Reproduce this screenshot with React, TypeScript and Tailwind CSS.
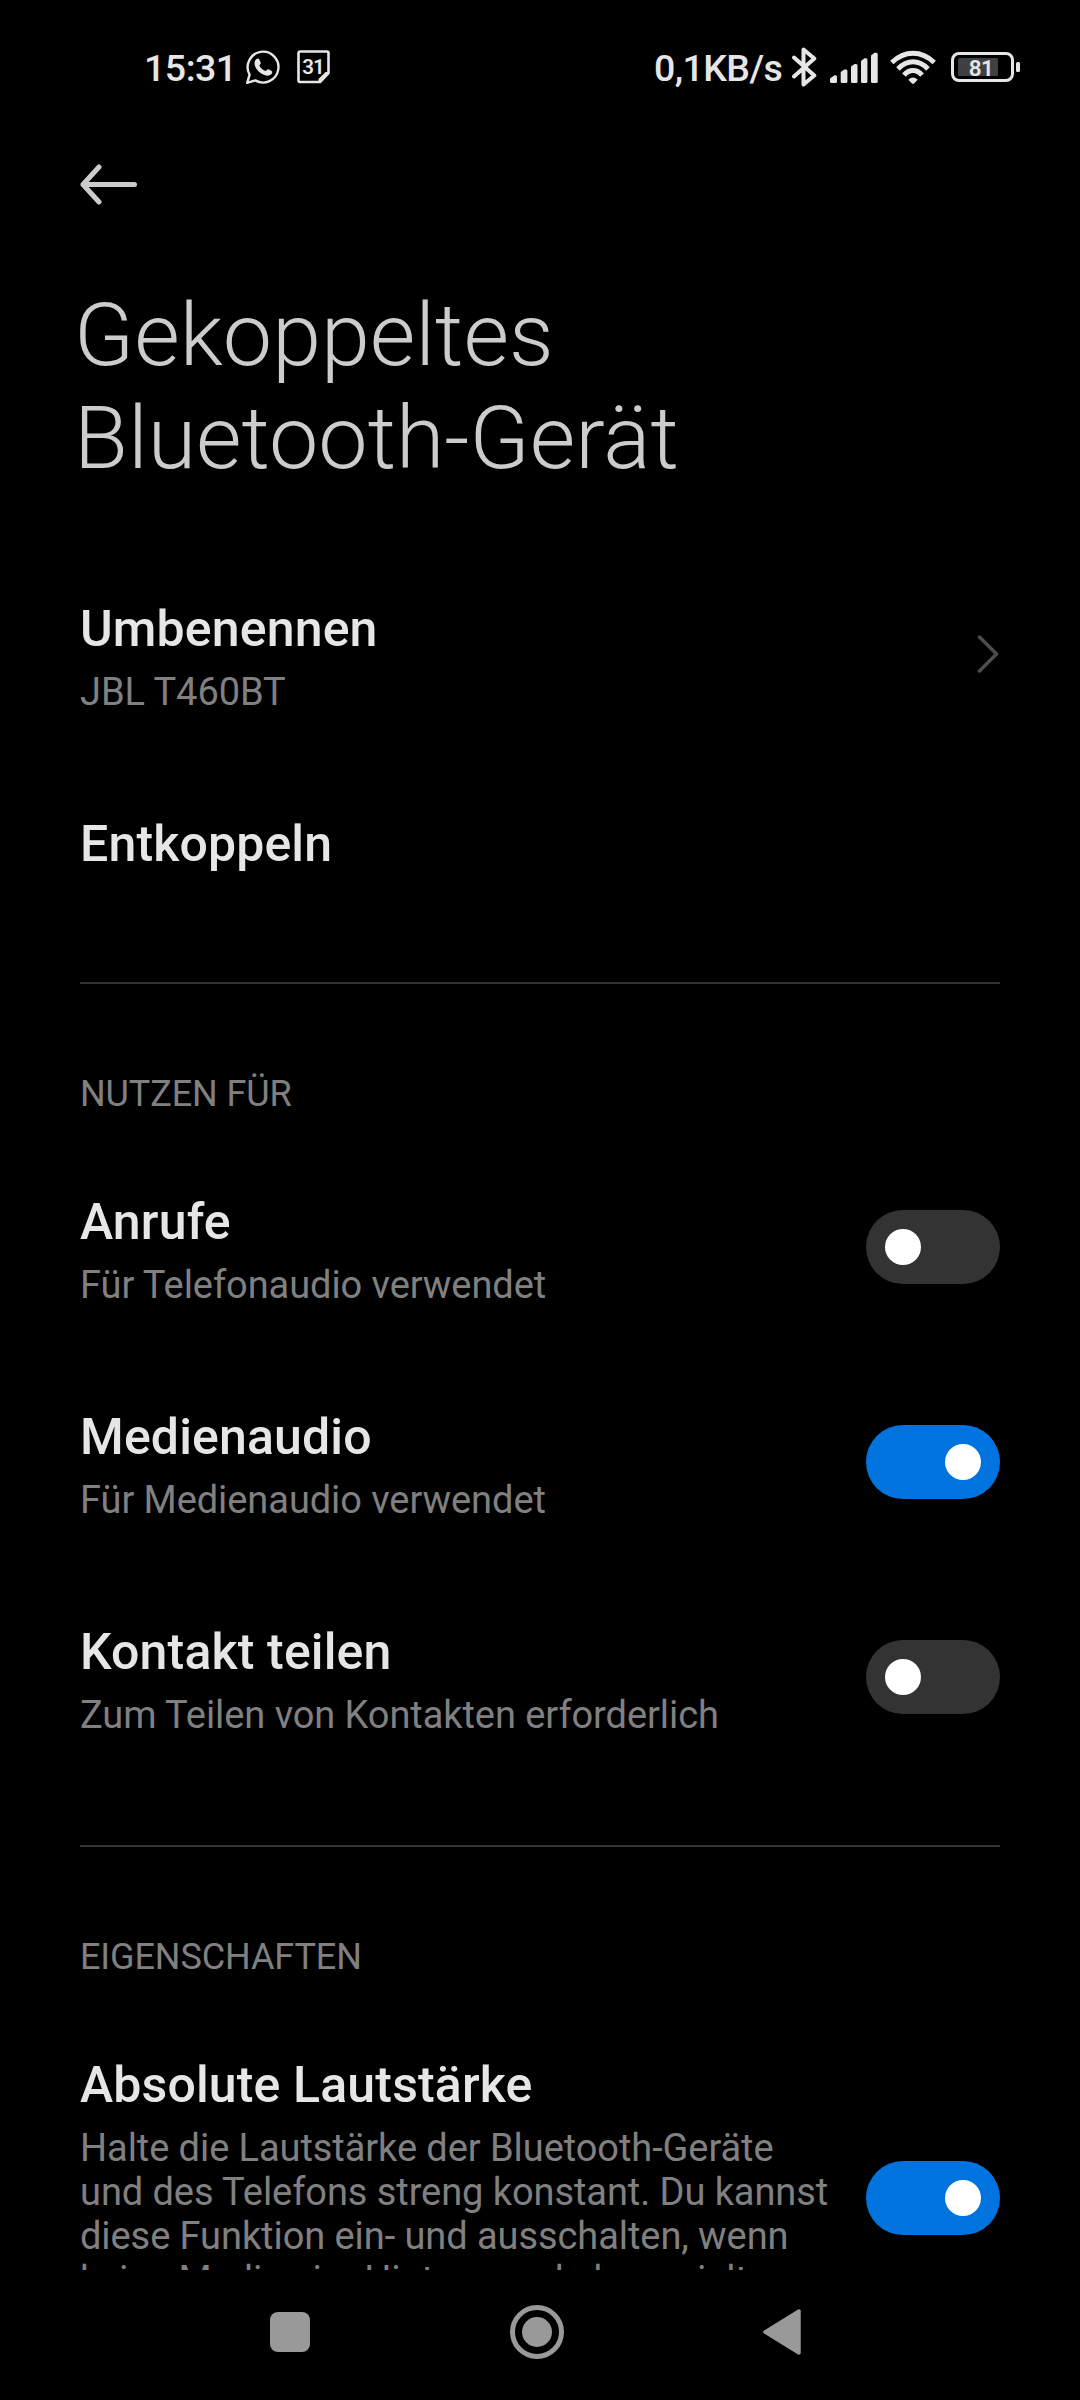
import { useState, type ReactNode } from "react";

function StatusBar() {
  return (
    <header className="flex h-[134px] shrink-0 items-center justify-between pl-[144px] pr-[60px] text-[37.5px] leading-[44px] font-medium text-[#e6e6e6]">
      <div className="flex items-center">
        <span className="mt-0.5 w-[102px] tracking-[-0.5px]">15:31</span>
        {/* WhatsApp */}
        <svg className="h-[34px] w-[34px]" viewBox="0 0 34 34" fill="none">
          <path
            d="M1.2 32.8 3.6 24.6A15.4 15.4 0 1 1 9.3 30.4Z"
            stroke="currentColor"
            strokeWidth="2.4"
            strokeLinejoin="round"
          />
          <path
            d="M10.2 9.3c1.2-1.2 2.6-1 3.1.1l1.4 3.2c.3.8-.2 1.6-1.4 2.8 1.6 2.8 3.6 4.6 6.5 5.7 1-1.2 1.7-2.2 2.600-1.800l3.300 1.600c1 .5.5 2.700-.7 3.700-1.700 1.400-4 1.500-7.200.1-4.200-1.900-7.200-5-8.600-8.300-1.200-2.900-.6-5.500 1-7.100Z"
            fill="currentColor"
          />
        </svg>
        {/* Calendar */}
        <svg className="ml-[17px] h-[34px] w-[34px]" viewBox="0 0 34 34" fill="none">
          <path
            d="M1.5 3A1.5 1.5 0 0 1 3 1.5H30A1.5 1.5 0 0 1 31.500 3V23L23 32H3A1.500 1.500 0 0 1 1.500 30.500Z"
            stroke="currentColor"
            strokeWidth="2.6"
            strokeLinejoin="round"
          />
          <path d="M21.500 32V29L28.500 22H31.500V24L24 32Z" fill="currentColor" />
          <text
            x="16"
            y="24"
            textAnchor="middle"
            fontSize="20.5"
            fontWeight="600"
            letterSpacing="-1"
            fill="currentColor"
          >
            31
          </text>
        </svg>
      </div>

      <div className="flex items-center">
        <span className="mt-0.5 w-[138px] tracking-[-0.6px]">0,1KB/s</span>
        {/* Bluetooth */}
        <svg className="h-10 w-[25px]" viewBox="0 0 25 40" fill="none">
          <path
            d="M2 10.5 22.3 28.5 11.5 37.5V2.5L22.3 11.5 2 29.5"
            stroke="currentColor"
            strokeWidth="4"
            strokeLinecap="round"
            strokeLinejoin="round"
          />
        </svg>
        {/* Signal */}
        <svg className="ml-[13px] h-8 w-12" viewBox="0 0 48 32" fill="currentColor">
          <path d="M0 27.5 4.5 24.2H5.5Q7 24.2 7 25.7V30.5Q7 32 5.5 32H1.5Q0 32 0 30.5Z" />
          <path d="M10.7 21 14.5 18.6H16Q17.4 18.6 17.4 20V30.5Q17.4 32 15.9 32H12.2Q10.7 32 10.7 30.5Z" />
          <path d="M21 15.5 24.7 13H26Q27.5 13 27.5 14.5V30.5Q27.5 32 26 32H22.5Q21 32 21 30.5Z" />
          <path d="M31 10 34.5 7.3H36Q37.4 7.3 37.4 8.8V30.5Q37.4 32 35.9 32H32.5Q31 32 31 30.5Z" />
          <path d="M41 4.5 44.5 1.8H46.3Q47.7 1.8 47.7 3.3V30.5Q47.7 32 46.2 32H42.5Q41 32 41 30.5Z" />
        </svg>
        {/* Wi-Fi */}
        <svg className="ml-[12px] h-[34px] w-[48px]" viewBox="0 0 48 34" fill="none">
          <g stroke="currentColor" strokeWidth="5">
            <path d="M1.8 12.5Q11.500 3.300 23 3.300T44.200 12.500" />
            <path d="M8 18.900Q15 11.800 23 11.800T38 18.900" />
            <path d="M14 25.200Q18 20.600 23 20.600T32 25.200" />
          </g>
          <path
            d="M18.300 29.800Q23 25.200 27.700 29.800L24 33.500Q23 34.300 22 33.500Z"
            fill="currentColor"
          />
        </svg>
        {/* Battery */}
        <svg className="ml-[13px] h-[30px] w-[69px]" viewBox="0 0 69 30" fill="none">
          <rect
            x="1.5"
            y="1.5"
            width="60"
            height="27"
            rx="6.5"
            stroke="currentColor"
            strokeWidth="3"
          />
          <rect x="7" y="6" width="40" height="18" rx="1.5" fill="#404040" />
          <rect x="65" y="10" width="4" height="10" rx="1.5" fill="currentColor" />
          <text
            x="30"
            y="23.5"
            textAnchor="middle"
            fontSize="22.5"
            fontWeight="600"
            letterSpacing="-0.5"
            fill="currentColor"
          >
            81
          </text>
        </svg>
      </div>
    </header>
  );
}

function Switch({ defaultOn }: { defaultOn: boolean }) {
  const [on, setOn] = useState(defaultOn);

  return (
    <button
      type="button"
      role="switch"
      aria-checked={on}
      onClick={() => setOn(!on)}
      className={
        on
          ? "mb-1.5 flex h-[74px] w-[134px] shrink-0 items-center justify-end rounded-full bg-[#0073df] px-[19px]"
          : "mb-1.5 flex h-[74px] w-[134px] shrink-0 items-center justify-start rounded-full bg-[#333333] px-[19px]"
      }
    >
      <span className="h-9 w-9 rounded-full bg-white" />
    </button>
  );
}

type RowProps = {
  title: string;
  summary?: string;
  children?: ReactNode;
};

function Row({ title, summary, children }: RowProps) {
  return (
    <li className="flex items-center justify-between pt-[53px] pb-12">
      <div className="w-[758px]">
        <p className="text-[50px] leading-[59px] font-medium tracking-[0.15px] text-[#e6e6e6]">
          {title}
        </p>
        {summary && (
          <p className="mt-[11px] text-[38px] leading-[44px] tracking-[-0.07px] text-[#808080]">
            {summary}
          </p>
        )}
      </div>
      {children}
    </li>
  );
}

function SectionTitle({ children }: { children: ReactNode }) {
  return (
    <h2 className="mt-[89px] mb-[25px] text-[36px] leading-[42px] tracking-[-0.1px] text-[#808080]">
      {children}
    </h2>
  );
}

export default function App() {
  return (
    <div className="flex h-[2400px] w-[1080px] flex-col overflow-hidden bg-black font-['Roboto',sans-serif]">
      <StatusBar />

      <main className="h-[2136px] overflow-hidden px-20">
        {/* Back */}
        <svg className="mt-[30px] h-[41px] w-[58px] text-[#cccccc]" viewBox="0 0 58 41" fill="none">
          <path
            d="M54.5 20.5H3M19 3 3 20.5 19 38"
            stroke="currentColor"
            strokeWidth="5"
            strokeLinecap="round"
            strokeLinejoin="round"
          />
        </svg>

        <h1 className="-ml-1.5 mt-[78px] text-[88px] leading-[103px] font-light text-[#cccccc]">
          Gekoppeltes
          <br />
          Bluetooth-Gerät
        </h1>

        <ul className="mt-[58px]">
          <Row title="Umbenennen" summary="JBL T460BT">
            <svg className="mr-px mb-1.5 h-[38px] w-[22px]" viewBox="0 0 22 38" fill="none">
              <path
                d="M2.5 2 19.5 19 2.5 36"
                stroke="#4d4d4d"
                strokeWidth="3.5"
                strokeLinecap="round"
                strokeLinejoin="round"
              />
            </svg>
          </Row>
          <Row title="Entkoppeln" />
        </ul>

        <hr className="mt-[60px] border-0 border-t-2 border-solid border-[#333333]" />
        <SectionTitle>NUTZEN FÜR</SectionTitle>
        <ul>
          <Row title="Anrufe" summary="Für Telefonaudio verwendet">
            <Switch defaultOn={false} />
          </Row>
          <Row title="Medienaudio" summary="Für Medienaudio verwendet">
            <Switch defaultOn={true} />
          </Row>
          <Row title="Kontakt teilen" summary="Zum Teilen von Kontakten erforderlich">
            <Switch defaultOn={false} />
          </Row>
        </ul>

        <hr className="mt-[60px] border-0 border-t-2 border-solid border-[#333333]" />
        <SectionTitle>EIGENSCHAFTEN</SectionTitle>
        <ul>
          <Row
            title="Absolute Lautstärke"
            summary="Halte die Lautstärke der Bluetooth-Geräte und des Telefons streng konstant. Du kannst diese Funktion ein- und ausschalten, wenn keine Medien im Hintergrund abgespielt werden."
          >
            <Switch defaultOn={true} />
          </Row>
        </ul>
      </main>

      {/* Navigation */}
      <nav className="flex h-[130px] shrink-0 items-center justify-between pl-[270px] pr-[279px] pb-1.5 text-[#999999]">
        <span className="h-10 w-10 rounded-[8px] bg-[#999999]" />
        <span className="ml-px flex h-[54px] w-[54px] items-center justify-center rounded-full border-[5px] border-[#999999]">
          <span className="h-[30px] w-[30px] rounded-full bg-[#999999]" />
        </span>
        <svg className="h-[46px] w-[38px]" viewBox="0 0 38 46" fill="currentColor">
          <path
            d="M2 23 36 2V44Z"
            stroke="currentColor"
            strokeWidth="3.5"
            strokeLinejoin="round"
          />
        </svg>
      </nav>
    </div>
  );
}
